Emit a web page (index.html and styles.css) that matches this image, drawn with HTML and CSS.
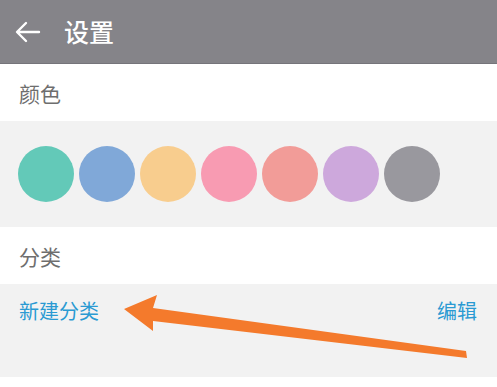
FILE: index.html
```html
<!DOCTYPE html>
<html lang="zh">
<head>
  <meta charset="UTF-8">
  <meta name="viewport" content="width=device-width, initial-scale=1.0">
  <title>设置</title>
  <link rel="stylesheet" href="styles.css">
</head>
<body>
  <div class="page">
    <header class="topbar">
      <svg class="back" width="26" height="22" viewBox="0 0 26 22">
        <path d="M24 11H3M11 2L2 11l9 9" fill="none" stroke="#fff" stroke-width="2.4" stroke-linecap="round" stroke-linejoin="round"/>
      </svg>
      <h1 class="title">设置</h1>
    </header>

    <div class="label">颜色</div>
    <div class="colors">
      <span class="dot teal"></span>
      <span class="dot blue"></span>
      <span class="dot yellow"></span>
      <span class="dot pink"></span>
      <span class="dot salmon"></span>
      <span class="dot purple"></span>
      <span class="dot gray"></span>
    </div>

    <div class="label">分类</div>
    <div class="category">
      <a class="link">新建分类</a>
      <a class="link">编辑</a>
    </div>

    <!-- 标注箭头 -->
    <svg class="mark" width="497" height="387" viewBox="0 0 497 387">
      <polygon fill="#f47a2c" points="124,309 157,295 153,308 466,351 467,358 153,321 153,331"/>
    </svg>
  </div>
</body>
</html>
```

FILE: styles.css
```css
* {
  box-sizing: border-box;
}

body {
  margin: 0;
  background-color: #fff;
  font-family: "Noto Sans CJK SC", "Noto Sans", sans-serif;
}

.page {
  position: relative;
  width: 497px;
  height: 387px;
  overflow: hidden;
}

.topbar {
  height: 64px;
  background-color: #858489;
  border-bottom: 1px solid #75747a;
  display: flex;
  align-items: center;
  padding-left: 15px;
}
.topbar .back {
  margin-right: 23px;
}
.title {
  margin: 0;
  color: #fff;
  font-size: 25px;
  font-weight: 500;
  line-height: 1;
}

.label {
  height: 57px;
  display: flex;
  align-items: center;
  padding-left: 19px;
  font-size: 21px;
  color: #6e6e6e;
  background-color: #fff;
}

.colors {
  height: 106px;
  background-color: #f2f2f2;
  display: flex;
  align-items: center;
  gap: 5px;
  padding-left: 18px;
}
.dot {
  width: 56px;
  height: 56px;
  border-radius: 50%;
}
.teal { background-color: #63c9b8; }
.blue { background-color: #80a8d8; }
.yellow { background-color: #f8cd8e; }
.pink { background-color: #f89bb2; }
.salmon { background-color: #f29c98; }
.purple { background-color: #cda8dc; }
.gray { background-color: #99989e; }

.category {
  height: 93px;
  background-color: #f2f2f2;
  display: flex;
  justify-content: space-between;
  align-items: flex-start;
  padding: 14px 20px 0 19px;
}
.link {
  font-size: 20px;
  color: #2a9ad2;
  line-height: 26px;
}

/* 截图上的箭头 */
.mark {
  position: absolute;
  left: 0;
  top: 0;
}
```
